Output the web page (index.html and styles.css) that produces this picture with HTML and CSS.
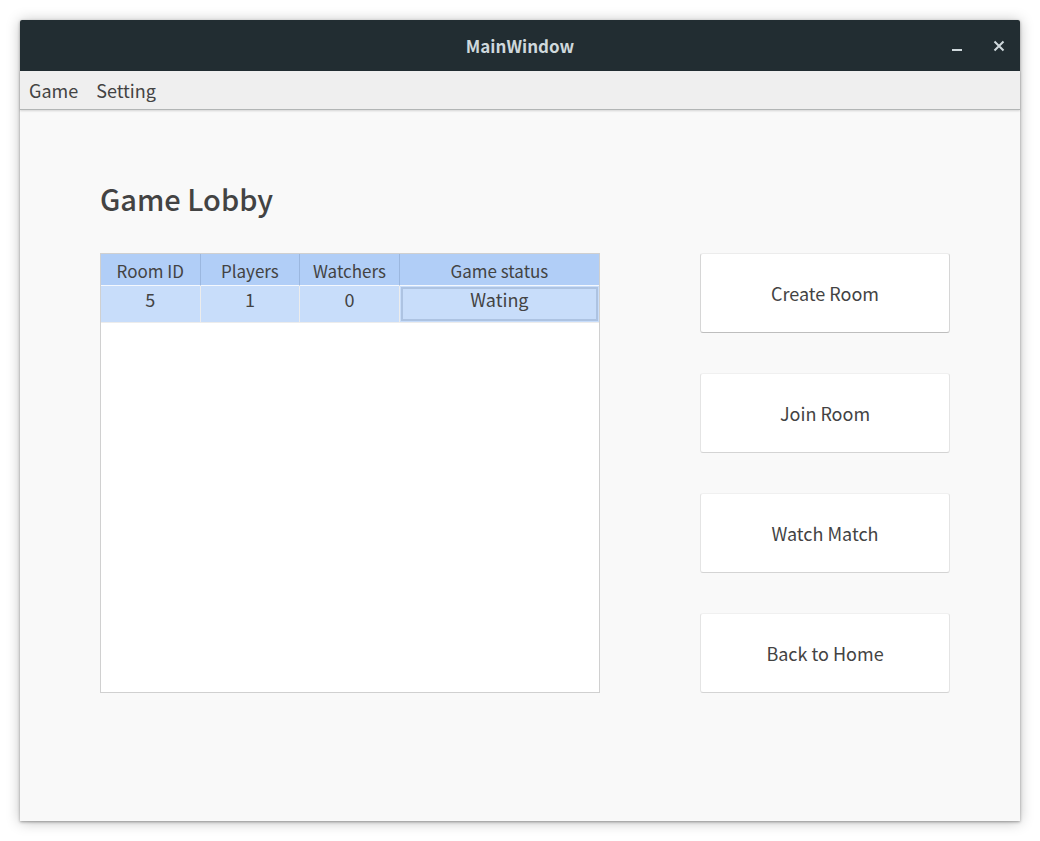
FILE: index.html
```html
<!DOCTYPE html>
<html lang="en">
<head>
<meta charset="utf-8">
<title>MainWindow</title>
<link rel="stylesheet" href="styles.css">
</head>
<body>
<div class="window">
  <header class="titlebar">
    <span class="titlebar-name">MainWindow</span>
    <div class="titlebar-controls">
      <button class="control" type="button" aria-label="Minimize">
        <svg width="14" height="14" viewBox="0 0 14 14"><path d="M2 11h10" stroke="currentColor" stroke-width="2" fill="none"/></svg>
      </button>
      <button class="control" type="button" aria-label="Close">
        <svg width="14" height="14" viewBox="0 0 14 14"><path d="M2.5 2.5l9 9M11.5 2.5l-9 9" stroke="currentColor" stroke-width="2" fill="none"/></svg>
      </button>
    </div>
  </header>
  <nav class="menubar">
    <button class="menu" type="button">Game</button>
    <button class="menu" type="button">Setting</button>
  </nav>
  <main class="lobby">
    <h1 class="lobby-title">Game Lobby</h1>
    <div class="lobby-body">
      <div class="rooms-frame">
        <table class="rooms">
          <thead>
            <tr><th>Room ID</th><th>Players</th><th>Watchers</th><th class="wide">Game status</th></tr>
          </thead>
          <tbody>
            <tr><td>5</td><td>1</td><td>0</td><td class="focused">Wating</td></tr>
          </tbody>
        </table>
      </div>
      <div class="actions">
        <button class="action active" type="button">Create Room</button>
        <button class="action" type="button">Join Room</button>
        <button class="action" type="button">Watch Match</button>
        <button class="action" type="button">Back to Home</button>
      </div>
    </div>
  </main>
</div>
</body>
</html>
```

FILE: styles.css
```css
* { box-sizing: border-box; }
body {
  margin: 0;
  min-height: 100vh;
  padding: 20px;
  display: flex;
  background: #fff;
  color: #434343;
  font-family: "Noto Sans CJK SC", "Noto Sans", sans-serif;
  font-size: 18px;
  line-height: 28px;
}
button { font: inherit; color: inherit; border: 0; background: none; padding: 0; }
.window {
  flex: 1;
  display: flex;
  flex-direction: column;
  border-radius: 2px 2px 0 0;
  background: #f9f9f9;
  box-shadow: 0 1px 3px rgba(0, 0, 0, 0.35), 0 1px 14px rgba(0, 0, 0, 0.25);
}
.titlebar {
  display: grid;
  grid-template-columns: 1fr auto 1fr;
  align-items: center;
  height: 51px;
  padding: 0 14px;
  border-radius: 2px 2px 0 0;
  background: #222d32;
  color: #cfd8dc;
}
.titlebar-name { grid-column: 2; font-size: 17px; font-weight: bold; }
.titlebar-controls { display: flex; justify-content: flex-end; gap: 28px; }
.control { display: flex; }
.menubar {
  display: flex;
  align-items: center;
  gap: 18px;
  height: 39px;
  padding: 0 9px;
  background: #efefef;
  border-bottom: 1px solid #b2b5b5;
  box-shadow: 0 1px 2px rgba(0, 0, 0, 0.15);
}
.lobby { padding: 66px 70px 40px 80px; }
.lobby-title { margin: 0 0 33px; font-size: 29px; line-height: 44px; font-weight: 500; }
.lobby-body { display: grid; grid-template-columns: 2fr 1fr; gap: 100px; }
.rooms-frame { border: 1px solid #d0d0d0; background: #fff; }
.rooms { width: 100%; table-layout: fixed; border-collapse: separate; border-spacing: 0; text-align: center; }
.rooms th {
  height: 32px;
  padding: 3px 0 0;
  background: #b1cef7;
  border-right: 1px solid #9bb7df;
  border-bottom: 1px solid #f4f8fe;
  font-size: 17px;
  line-height: 28px;
  font-weight: normal;
}
.rooms th.wide { width: 40%; }
.rooms th:last-child { border-right: 0; }
.rooms td {
  height: 37px;
  padding: 0 0 8px;
  line-height: 26px;
  vertical-align: top;
  background: #c8ddfa;
  border-right: 1px solid #ececec;
  border-bottom: 1px solid #ececec;
}
.rooms td.focused { border-right: 0; box-shadow: inset 0 0 0 1px #c8ddfa, inset 0 0 0 3px #adc3e2; }
.actions { display: grid; gap: 40px; }
.action {
  height: 80px;
  background: #fff;
  border: 1px solid #e4e4e4;
  border-top-color: #f0f0f0;
  border-bottom-color: #d4d4d4;
  border-radius: 3px;
}
.action.active { border-color: #ececec #d6d6d6 #bebebe; }
```
